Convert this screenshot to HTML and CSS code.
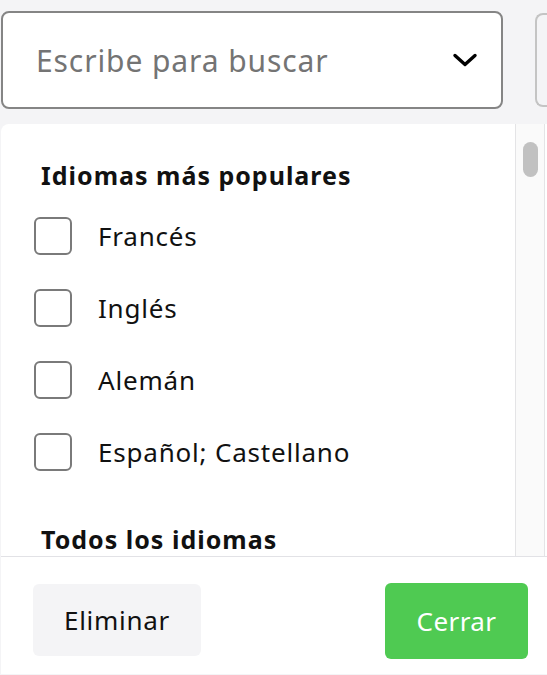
FILE: index.html
```html
<!DOCTYPE html>
<html lang="es">
<head>
<meta charset="utf-8">
<link rel="stylesheet" href="styles.css">
</head>
<body>
<div class="top">
  <div class="search">
    <span class="placeholder">Escribe para buscar</span>
    <svg class="chev" width="26" height="16" viewBox="0 0 26 16"><path d="M3 3.5 L13 12.5 L23 3.5" fill="none" stroke="#000" stroke-width="3.4" stroke-linecap="round" stroke-linejoin="round"/></svg>
  </div>
  <div class="other"></div>
</div>
<div class="panel">
  <div class="scroll">
    <div class="content">
      <h3 class="group">Idiomas más populares</h3>
      <label class="row"><span class="box"></span><span class="label">Francés</span></label>
      <label class="row"><span class="box"></span><span class="label">Inglés</span></label>
      <label class="row"><span class="box"></span><span class="label">Alemán</span></label>
      <label class="row"><span class="box"></span><span class="label">Español; Castellano</span></label>
      <h3 class="group group2">Todos los idiomas</h3>
    </div>
    <div class="bar"><div class="thumb"></div></div>
  </div>
  <div class="footer">
    <button class="btn btn-clear">Eliminar</button>
    <button class="btn btn-close">Cerrar</button>
  </div>
</div>
</body>
</html>
```

FILE: styles.css
```css
* { box-sizing: border-box; }
html, body { margin: 0; height: 100%; overflow: hidden; }
body {
  background: #f4f4f6;
  font-family: "Noto Sans", Lato, sans-serif;
  color: #111;
}
.top {
  display: flex;
  align-items: center;
  padding-top: 11px;
  padding-left: 1px;
}
.search {
  width: 502px;
  height: 98px;
  flex: none;
  background: #fff;
  border: 2px solid #858585;
  border-radius: 8px;
  display: flex;
  align-items: center;
  justify-content: space-between;
  padding: 0 23px 0 33px;
}
.placeholder {
  font-size: 30px;
  letter-spacing: 0.9px;
  color: #747474;
}
.chev { display: block; }
.other {
  flex: none;
  margin-left: 32px;
  width: 12px;
  height: 94px;
  background: #f4f4f6;
  border: 2px solid #c4c4c4;
  border-right: none;
  border-radius: 8px 0 0 8px;
}
.panel {
  margin: 15px 0 0 1px;
  width: 546px;
  height: 550px;
  background: #fff;
  border-radius: 8px 0 0 0;
  display: flex;
  flex-direction: column;
}
.scroll {
  height: 432px;
  display: flex;
  overflow: hidden;
}
.content {
  width: 514px;
  padding: 35px 0 0 40px;
}
.group {
  margin: 0;
  font-size: 25px;
  font-weight: 700;
  letter-spacing: 1px;
  line-height: 32px;
  color: #111;
}
.row {
  display: flex;
  align-items: center;
  height: 72px;
}
.row:first-of-type { margin-top: 9px; }
.box {
  width: 38px;
  height: 38px;
  margin-left: -7px;
  border: 2px solid #7a7a7a;
  border-radius: 6px;
  flex: none;
}
.label {
  margin-left: 26px;
  font-size: 26px;
  letter-spacing: 0.8px;
  color: #111;
}
.group2 { margin-top: 35px; }
.bar {
  width: 30px;
  flex: none;
  background: #fafafa;
  border-left: 1px solid #e4e4e6;
  border-right: 1px solid #e4e4e6;
  padding: 18px 0 0 7px;
}
.thumb {
  width: 15px;
  height: 35px;
  border-radius: 8px;
  background: #c1c1c1;
}
.footer {
  border-top: 1px solid #e2e2e6;
  flex: 1;
  display: flex;
  align-items: flex-start;
  padding: 26px 0 0 32px;
}
.btn {
  font-family: inherit;
  font-size: 26px;
  border: none;
  border-radius: 6px;
  cursor: pointer;
}
.btn-clear {
  margin-top: 1px;
  width: 168px;
  height: 72px;
  background: #f4f4f6;
  color: #111;
  letter-spacing: 0.7px;
}
.btn-close {
  margin-left: 184px;
  width: 143px;
  height: 76px;
  background: #4fca52;
  color: #fff;
  letter-spacing: 0.4px;
}
```
